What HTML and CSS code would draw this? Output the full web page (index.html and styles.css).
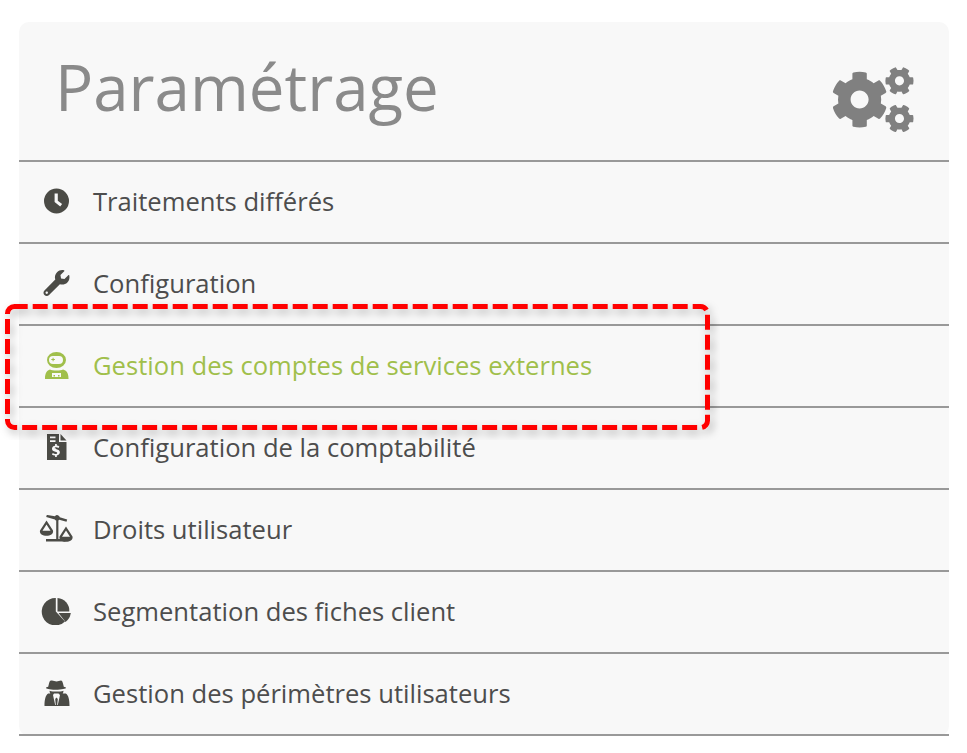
FILE: index.html
```html
<!DOCTYPE html>
<html lang="fr">
<head>
<meta charset="utf-8">
<title>Paramétrage</title>
<link rel="stylesheet" href="styles.css">
</head>
<body>
<main class="card">
  <header class="card-head">
    <h1 class="title">Paramétrage</h1>
    <svg class="cogs" viewBox="0 0 82 66" aria-hidden="true">
      <path transform="translate(-1.2 3.800) scale(.1125)" d="M487.4 315.7l-42.6-24.6c4.3-23.2 4.3-47 0-70.2l42.6-24.6c4.9-2.8 7.1-8.6 5.5-14-11.1-35.6-30-67.8-54.7-94.6-3.8-4.1-10-5.1-14.8-2.3L380.8 110c-17.9-15.4-38.5-27.3-60.8-35.1V25.8c0-5.6-3.9-10.5-9.4-11.7-36.7-8.2-74.3-7.8-109.2 0-5.5 1.2-9.4 6.1-9.4 11.7V75c-22.2 7.9-42.8 19.8-60.8 35.1L88.7 85.5c-4.9-2.8-11-1.9-14.8 2.3-24.7 26.7-43.6 58.9-54.7 94.6-1.7 5.4.6 11.2 5.5 14L67.3 221c-4.3 23.2-4.3 47 0 70.2l-42.6 24.6c-4.9 2.8-7.1 8.6-5.5 14 11.1 35.6 30 67.8 54.7 94.6 3.8 4.1 10 5.1 14.8 2.3l42.6-24.6c17.9 15.4 38.5 27.3 60.8 35.1v49.2c0 5.6 3.9 10.5 9.4 11.7 36.7 8.2 74.3 7.8 109.2 0 5.5-1.2 9.4-6.1 9.4-11.7v-49.2c22.2-7.9 42.8-19.8 60.8-35.1l42.6 24.6c4.9 2.8 11 1.9 14.8-2.3 24.7-26.7 43.6-58.9 54.7-94.6 1.5-5.5-.7-11.3-5.6-14.1zM256 336c-44.1 0-80-35.9-80-80s35.9-80 80-80 80 35.9 80 80-35.9 80-80 80z"/>
      <path transform="translate(82 -.7) rotate(90) scale(.0568)" d="M487.4 315.7l-42.6-24.6c4.3-23.2 4.3-47 0-70.2l42.6-24.6c4.9-2.8 7.1-8.6 5.5-14-11.1-35.6-30-67.8-54.7-94.6-3.8-4.1-10-5.1-14.8-2.3L380.8 110c-17.9-15.4-38.5-27.3-60.8-35.1V25.8c0-5.6-3.9-10.5-9.4-11.7-36.7-8.2-74.3-7.8-109.2 0-5.5 1.2-9.4 6.1-9.4 11.7V75c-22.2 7.9-42.8 19.8-60.8 35.1L88.7 85.5c-4.9-2.8-11-1.9-14.8 2.3-24.7 26.7-43.6 58.9-54.7 94.6-1.7 5.4.6 11.2 5.5 14L67.3 221c-4.3 23.2-4.3 47 0 70.2l-42.6 24.6c-4.9 2.8-7.1 8.6-5.5 14 11.1 35.6 30 67.8 54.7 94.6 3.8 4.1 10 5.1 14.8 2.3l42.6-24.6c17.9 15.4 38.5 27.3 60.8 35.1v49.2c0 5.6 3.9 10.5 9.4 11.7 36.7 8.2 74.3 7.8 109.2 0 5.5-1.2 9.4-6.1 9.4-11.7v-49.2c22.2-7.9 42.8-19.8 60.8-35.1l42.6 24.6c4.9 2.8 11 1.9 14.8-2.3 24.7-26.7 43.6-58.9 54.7-94.6 1.5-5.5-.7-11.3-5.6-14.1zM256 336c-44.1 0-80-35.9-80-80s35.9-80 80-80 80 35.9 80 80-35.9 80-80 80z"/>
      <path transform="translate(82 37) rotate(90) scale(.0568)" d="M487.4 315.7l-42.6-24.6c4.3-23.2 4.3-47 0-70.2l42.6-24.6c4.9-2.8 7.1-8.6 5.5-14-11.1-35.6-30-67.8-54.7-94.6-3.8-4.1-10-5.1-14.8-2.3L380.8 110c-17.9-15.4-38.5-27.3-60.8-35.1V25.8c0-5.6-3.9-10.5-9.4-11.7-36.7-8.2-74.3-7.8-109.2 0-5.5 1.2-9.4 6.1-9.4 11.7V75c-22.2 7.9-42.8 19.8-60.8 35.1L88.7 85.5c-4.9-2.8-11-1.9-14.8 2.3-24.7 26.7-43.6 58.9-54.7 94.6-1.7 5.4.6 11.2 5.5 14L67.3 221c-4.3 23.2-4.3 47 0 70.2l-42.6 24.6c-4.9 2.8-7.1 8.6-5.5 14 11.1 35.6 30 67.8 54.7 94.6 3.8 4.1 10 5.1 14.8 2.3l42.6-24.6c17.9 15.4 38.5 27.3 60.8 35.1v49.2c0 5.6 3.9 10.5 9.4 11.7 36.7 8.2 74.3 7.8 109.2 0 5.5-1.2 9.4-6.1 9.4-11.7v-49.2c22.2-7.9 42.8-19.8 60.8-35.1l42.6 24.6c4.9 2.8 11 1.9 14.8-2.3 24.7-26.7 43.6-58.9 54.7-94.6 1.5-5.5-.7-11.3-5.6-14.1zM256 336c-44.1 0-80-35.9-80-80s35.9-80 80-80 80 35.9 80 80-35.9 80-80 80z"/>
    </svg>
  </header>
  <ul class="menu">
    <li class="item">
      <svg class="icon" viewBox="0 0 37 28" aria-hidden="true"><path fill-rule="evenodd" d="M18.5 1.500a12.500 12.500 0 1 1 0 25 12.500 12.500 0 0 1 0-25zM16.600 6.500v8.600l5.600 4.300 1.900-2.400-4.300-3.300V6.500z"/></svg>
      <span>Traitements différés</span>
    </li>
    <li class="item">
      <svg class="icon" viewBox="0 0 37 28" aria-hidden="true"><path transform="translate(5.500 1) scale(.0508)" d="M507.73 109.1c-2.24-9.03-13.54-12.09-20.12-5.51l-74.36 74.36-67.88-11.31-11.31-67.88 74.36-74.36c6.62-6.62 3.43-17.9-5.66-20.16-47.38-11.74-99.55.91-136.58 37.93-39.64 39.64-50.55 97.1-34.05 147.2L18.74 402.76c-24.99 24.99-24.99 65.51 0 90.5 24.99 24.99 65.51 24.99 90.5 0l213.21-213.21c50.12 16.71 107.47 5.68 147.37-34.22 37.07-37.07 49.7-89.32 37.91-136.73zM64 472c-13.25 0-24-10.75-24-24 0-13.26 10.75-24 24-24s24 10.74 24 24c0 13.25-10.75 24-24 24z"/></svg>
      <span>Configuration</span>
    </li>
    <li class="item item-active">
      <svg class="icon" viewBox="0 0 37 28" aria-hidden="true"><path fill-rule="evenodd" d="M9 9a9.500 8 0 1 1 19 0a9.500 8 0 1 1-19 0zM15 5a4 4 0 0 0 0 8h6a4 4 0 0 0 0-8z"/><path d="M14.600 6.700h1v1.300h1.300v1h-1.300v1.300h-1V9h-1.300V8h1.300z"/><path fill-rule="evenodd" d="M12 18.500c2 1.300 11 1.300 13 0 3.500.8 5.500 3.500 5.500 9v.5H7v-.5c0-5.500 2-8.200 5-9zM14 22v4h9v-4z"/><path d="M15.500 24h1.500v1.500h-1.500zM20 24h1.500v1.500H20z"/></svg>
      <span>Gestion des comptes de services externes</span>
    </li>
    <li class="item">
      <svg class="icon" viewBox="0 0 37 28" aria-hidden="true"><path fill-rule="evenodd" d="M9 1h12v8h7.500v18H9zM12 3.500v1.800h5.500V3.500zM12 7.300v1.800h5.500V7.300zM17.100 11v1.700c-2 .3-3.100 1.400-3.100 3 0 1.800 1.400 2.500 3.400 3 1.200.3 1.800.6 1.800 1.200 0 .6-.6 1-1.600 1-1 0-1.900-.4-2.800-1l-.9 1.500c.9.7 1.900 1.100 3.200 1.200V24h1.700v-1.600c2-.3 3.100-1.500 3.100-3.100 0-1.800-1.300-2.500-3.400-3.100-1.200-.3-1.800-.6-1.800-1.100 0-.5.500-.9 1.400-.9.900 0 1.700.3 2.400.8l.9-1.500c-.7-.5-1.500-.9-2.600-1V11z"/><path d="M22.500 1l6 6.500h-6z"/></svg>
      <span>Configuration de la comptabilité</span>
    </li>
    <li class="item">
      <svg class="icon" viewBox="0 0 37 28" aria-hidden="true"><path d="M17 1.200a2.700 2.700 0 0 1 4.800 1.100l7.400 2.100-.7 2.300-7.300-2-.8.700V24h7v2.500H8V24h10.200V5.600c-.6-.2-1.100-.6-1.300-1.100L8.200 2.100l.6-2.200z"/><path fill-rule="evenodd" d="M8.500 5.500l6.500 10c.8 3.400-2.800 5.300-6.500 5.300S1.200 18.900 2 15.500zM8.500 9.500l-4 6.300h8z"/><path fill-rule="evenodd" d="M28 11.500l6.500 10c.8 3.400-2.800 5.300-6.500 5.300s-7.300-1.900-6.500-5.300zM28 15.500l-4 6.300h8z"/></svg>
      <span>Droits utilisateur</span>
    </li>
    <li class="item">
      <svg class="icon" viewBox="0 0 37 28" aria-hidden="true"><path d="M17.800 1v13.500l9.200 10A13.700 13.700 0 1 1 17.800 1z"/><path d="M19.500 1v13.500h11.800A12.800 12.800 0 0 0 19.500 1z"/><path d="M20.500 16h12.300a13.500 13.500 0 0 1-5.300 9z"/></svg>
      <span>Segmentation des fiches client</span>
    </li>
    <li class="item">
      <svg class="icon" viewBox="0 0 37 28" aria-hidden="true"><path fill-rule="evenodd" d="M14 1.500c1.500 0 3 1 4.500 1s3-1 4.500-1c1 0 1.500 1 2 3l.8 3.300c1.300.3 2.200.7 2.200 1.200s-4 1.800-10.500 1.800S8 9.500 8 9s.9-.9 2.200-1.200L11 4.500c.5-2 1-3 2-3zM11.500 11.800c2 .6 4.500.8 7 .8s5-.2 7-.8c0 1-.3 2-.8 2.800h3.100c3 1.500 3.700 7.500 3.700 12.400H6.500c0-4.900.7-10.900 3.700-12.400h2.100c-.5-.8-.8-1.800-.8-2.800zM15 16l2.200 10h.6l-.6-6 1.300-1.500 1.300 1.500-.6 6h.6l2.200-10-1.500-1.500h-4.500z"/></svg>
      <span>Gestion des périmètres utilisateurs</span>
    </li>
  </ul>
</main>
<svg class="highlight" viewBox="0 0 720 140" aria-hidden="true">
  <defs><filter id="shadow" x="-5%" y="-20%" width="110%" height="140%"><feDropShadow dx="3" dy="4" stdDeviation="4" flood-color="#000" flood-opacity=".28"/></filter></defs>
  <rect class="highlight-rect" x="7.500" y="6.500" width="700" height="121" rx="7" filter="url(#shadow)"/>
</svg>
</body>
</html>
```
FILE: styles.css
```css
* { box-sizing: border-box; }
html, body { margin: 0; padding: 0; }
body {
  position: relative;
  height: 753px;
  overflow: hidden;
  background: #fff;
  font-family: "Open Sans", sans-serif;
  padding: 22px 18px 0 19px;
}
.card {
  background: #f8f8f8;
  border-radius: 10px;
}
.card-head {
  height: 140px;
  display: flex;
  justify-content: space-between;
  align-items: center;
  padding: 0 35px 0 36px;
  border-bottom: 2px solid #999;
}
.title {
  margin: 0;
  font-size: 63.600px;
  font-weight: 400;
  line-height: 1;
  color: #8a8a8a;
  position: relative;
  top: -4px;
}
.cogs {
  width: 82px;
  height: 66px;
  fill: #808080;
  align-self: flex-end;
  margin-bottom: 27px;
}
.menu { list-style: none; margin: 0; padding: 0; }
.item {
  height: 82px;
  display: flex;
  align-items: center;
  gap: 18px;
  padding-left: 19px;
  padding-bottom: 2px;
  border-bottom: 2px solid #999;
  font-size: 25.600px;
  color: #4d4d4d;
  fill: #4b4b46;
}
.icon { width: 37px; height: 28px; flex: none; }
.item-active { color: #a0bf4b; fill: #a0bf4b; }
.highlight {
  position: absolute;
  left: 0;
  top: 300px;
  width: 720px;
  height: 140px;
}
.highlight-rect {
  fill: none;
  stroke: #f00;
  stroke-width: 5;
  stroke-dasharray: 15 5;
  stroke-dashoffset: 1.800;
}
```
